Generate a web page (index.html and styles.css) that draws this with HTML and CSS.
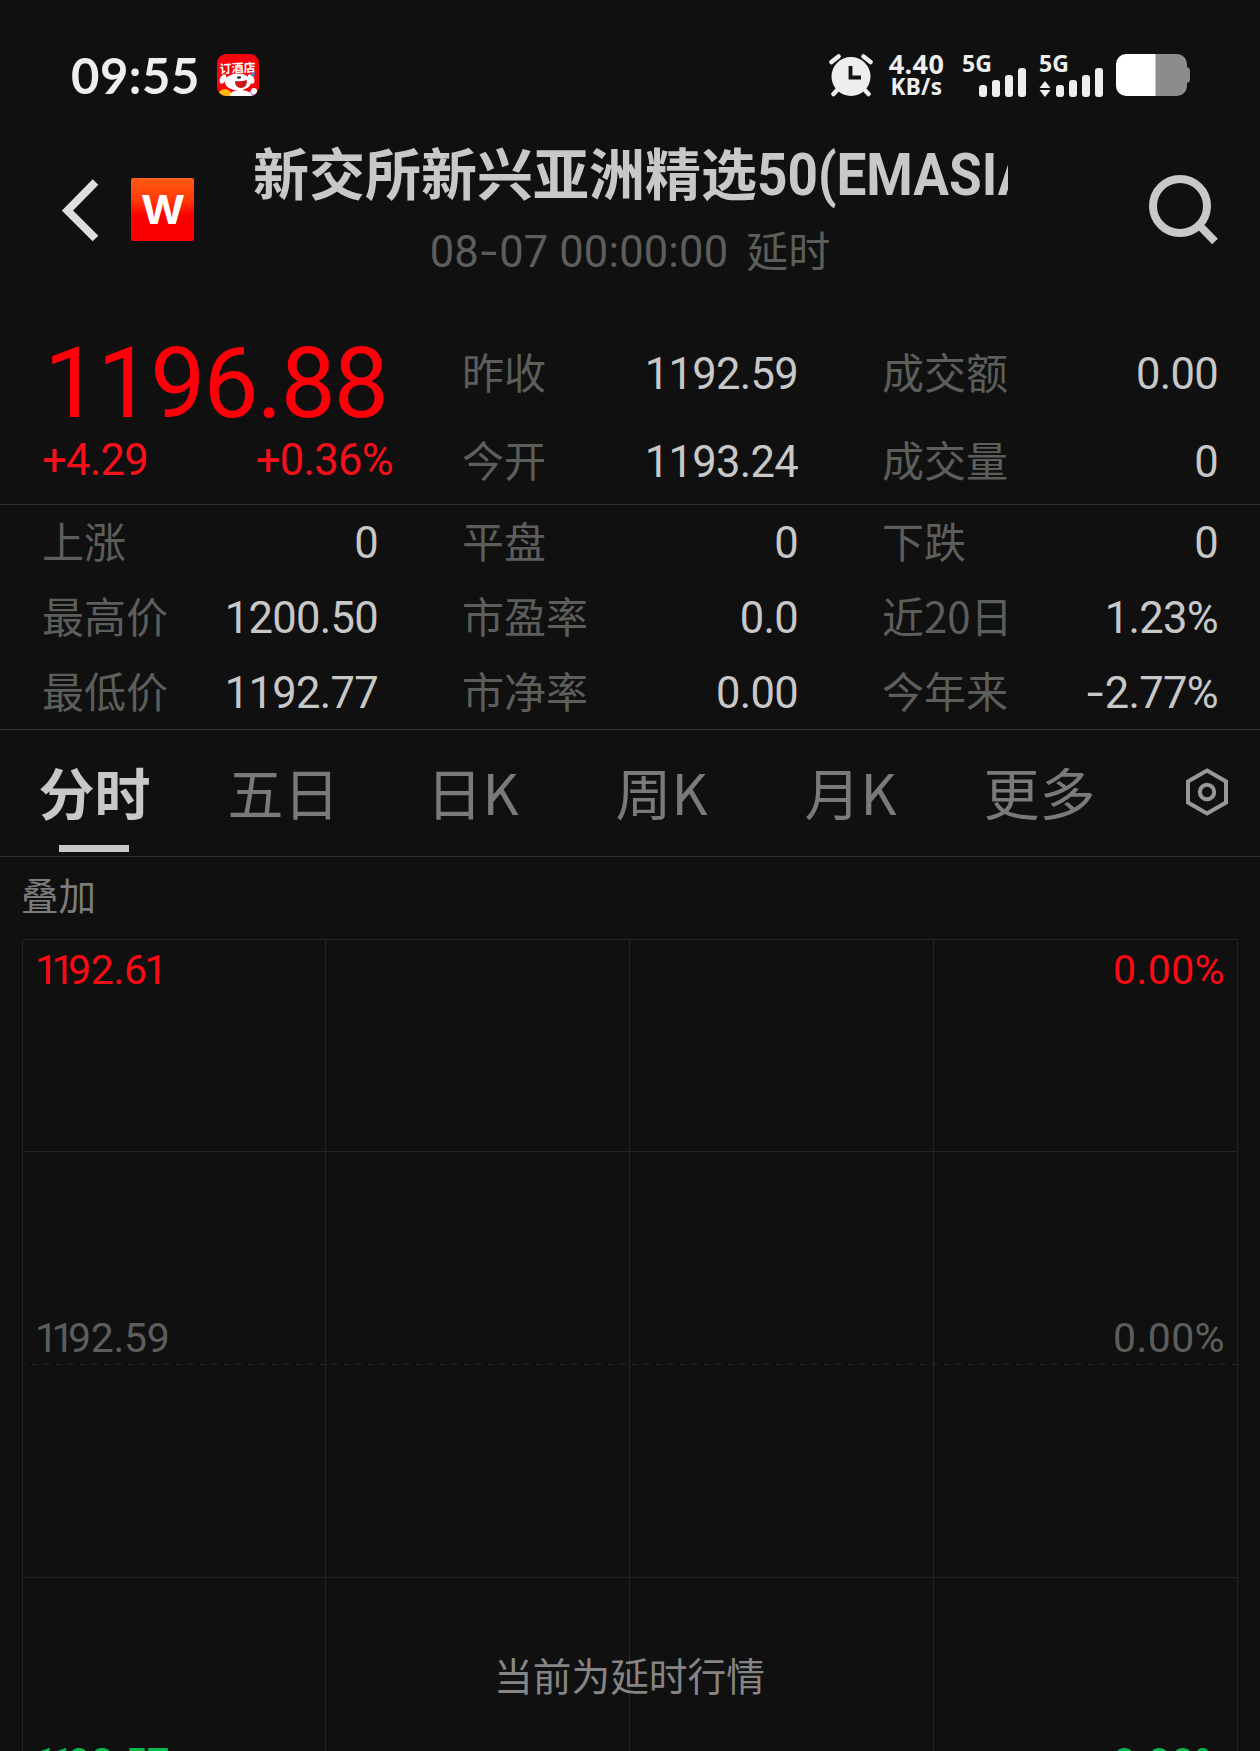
FILE: index.html
```html
<!DOCTYPE html>
<html lang="zh-CN">
<head>
<meta charset="utf-8">
<title>新交所新兴亚洲精选50</title>
<link rel="stylesheet" href="styles.css">
</head>
<body>
<div class="screen">
  <div class="status">
    <span class="clock">09:55</span>
    <svg class="app-icon" width="42" height="42" viewBox="0 0 42 42">
      <defs><clipPath id="app"><rect width="42" height="42" rx="9"/></clipPath></defs>
      <g clip-path="url(#app)">
        <rect width="42" height="42" fill="#f5060e"/>
        <circle cx="8" cy="42" r="7" fill="#ffb70f"/>
        <circle cx="35" cy="42" r="5" fill="#c99af5"/>
        <text x="2.500" y="18.500" class="app-text" transform="rotate(-3 20 15)">订酒店</text>
        <ellipse cx="6" cy="25" rx="3" ry="5" fill="#fff" transform="rotate(25 6 25)"/>
        <ellipse cx="34" cy="25" rx="3" ry="5" fill="#fff" transform="rotate(-25 34 25)"/>
        <ellipse cx="21" cy="28" rx="13" ry="8.500" fill="#fff"/>
        <path d="M13 42c0-8 20-8 22 0z" fill="#fff"/>
        <circle cx="37" cy="37" r="3" fill="#fff"/>
        <path d="M18 27q6 1 12-1q0 8-6 8t-6-7z" fill="#c9151b"/>
        <ellipse cx="22" cy="23.500" rx="2" ry="1.300" fill="#222"/>
        <path d="M33 21l5-4-1 6z" fill="#3d8be8"/>
      </g>
    </svg>
    <div class="status-right">
      <svg class="alarm" width="44" height="43" viewBox="0 0 44 43">
        <g stroke="#eee" stroke-linecap="round" fill="none">
          <path d="M2.500 8l7-5.500M41.500 8l-7-5.500" stroke-width="4.500"/>
          <path d="M10 34l-5.500 6M34 34l5.500 6" stroke-width="4.500"/>
        </g>
        <circle cx="22" cy="22.500" r="19.500" fill="#eee"/>
        <path d="M21.500 12v11.500h10.500" stroke="#101010" stroke-width="3.800" fill="none"/>
      </svg>
      <div class="speed"><span>4.40</span><span class="unit">KB/s</span></div>
      <div class="signal">
        <span class="net">5G</span>
        <svg width="65" height="43" viewBox="0 0 65 43" fill="#eee">
          <rect x="17" y="31" width="8" height="12" rx="3"/><rect x="30" y="26" width="8" height="17" rx="3"/><rect x="43" y="21" width="8" height="22" rx="3"/><rect x="56" y="14" width="8" height="29" rx="3"/>
        </svg>
      </div>
      <div class="signal second">
        <span class="net">5G</span>
        <svg width="65" height="43" viewBox="0 0 65 43" fill="#eee">
          <path d="M6 27l5.500 7h-11zM6 43l5.500-7h-11z"/>
          <rect x="17" y="31" width="8" height="12" rx="3"/><rect x="30" y="26" width="8" height="17" rx="3"/><rect x="43" y="21" width="8" height="22" rx="3"/><rect x="56" y="14" width="8" height="29" rx="3"/>
        </svg>
      </div>
      <svg class="battery" width="75" height="42" viewBox="0 0 75 42">
        <path d="M39 0h22a10 10 0 0 1 10 10v3q3 1 3 4v8q0 3-3 4v3a10 10 0 0 1-10 10h-22z" fill="#8e8b8e"/>
        <path d="M39.500 0h-29.500a10 10 0 0 0-10 10v22a10 10 0 0 0 10 10h29.500z" fill="#fff"/>
      </svg>
    </div>
  </div>

  <header class="header">
    <div class="nav">
      <svg width="38" height="64" viewBox="0 0 38 64"><path d="M33.500 4L5.500 32.500l28 28" fill="none" stroke="#dedede" stroke-width="8"/></svg>
      <svg class="logo" width="63" height="63" viewBox="0 0 63 63">
        <defs><linearGradient id="lg" x2="0" y2="1"><stop offset="0" stop-color="#ff5d12"/><stop offset=".35" stop-color="#ff3a0a"/><stop offset=".6" stop-color="#fb0000"/></linearGradient></defs>
        <rect width="63" height="63" rx="2" fill="url(#lg)"/>
        <text x="32" y="46" class="logo-text" text-anchor="middle" textLength="44" lengthAdjust="spacingAndGlyphs">W</text>
      </svg>
    </div>
    <div class="heading">
      <h1 class="title">新交所新兴亚洲精选<span class="title-latin">50(EMASIA)</span></h1>
      <div class="time"><span class="stamp">08<span class="dash">-</span>07 00:00:00</span><span>延时</span></div>
    </div>
    <svg class="search" width="72" height="72" viewBox="0 0 72 72"><g fill="none" stroke="#c8c8c8"><circle cx="31" cy="33" r="27" stroke-width="8"/><path d="M50 52l16 16.500" stroke-width="8"/></g></svg>
  </header>

  <section class="quote">
    <div class="cell price">1196.88</div>
    <div class="cell"><span class="label">昨收</span><span class="value">1192.59</span></div>
    <div class="cell"><span class="label">成交额</span><span class="value">0.00</span></div>
    <div class="cell change"><span>+4.29</span><span>+0.36%</span></div>
    <div class="cell"><span class="label">今开</span><span class="value">1193.24</span></div>
    <div class="cell"><span class="label">成交量</span><span class="value">0</span></div>
  </section>

  <section class="details">
    <div class="cell"><span class="label">上涨</span><span class="value">0</span></div>
    <div class="cell"><span class="label">平盘</span><span class="value">0</span></div>
    <div class="cell"><span class="label">下跌</span><span class="value">0</span></div>
    <div class="cell"><span class="label">最高价</span><span class="value">1200.50</span></div>
    <div class="cell"><span class="label">市盈率</span><span class="value">0.0</span></div>
    <div class="cell"><span class="label">近20日</span><span class="value">1.23%</span></div>
    <div class="cell"><span class="label">最低价</span><span class="value">1192.77</span></div>
    <div class="cell"><span class="label">市净率</span><span class="value">0.00</span></div>
    <div class="cell"><span class="label">今年来</span><span class="value"><span class="dash">-</span>2.77%</span></div>
  </section>

  <nav class="tabs">
    <span class="tab active">分时</span>
    <span class="tab">五日</span>
    <span class="tab">日K</span>
    <span class="tab">周K</span>
    <span class="tab">月K</span>
    <span class="tab">更多</span>
    <svg class="gear" width="44" height="50" viewBox="0 0 44 50" fill="none" stroke="#98989c" stroke-width="4"><path d="M22 3.500L41 14.500v21L22 46.500L3 35.500v-21z"/><circle cx="22" cy="25" r="7.200"/></svg>
  </nav>

  <div class="overlay">叠加</div>

  <section class="chart">
    <svg class="grid" width="1217" height="812" viewBox="0 0 1217 812" fill="none" stroke="#242424">
      <path d="M.5 812V.5H1215.500V812M303.500 0V812M607.500 0V812M911.500 0V812M0 212.500H1216M0 638.500H1216"/>
      <path d="M-2 425.500H1216" stroke-dasharray="6 6"/>
    </svg>
    <div class="axis up"><span><i>11</i>92.<i class="tight">6</i>1</span><span class="pct">0.00%</span></div>
    <div class="axis mid"><span><i>11</i>92.59</span><span class="pct">0.00%</span></div>
    <div class="notice">当前为延时行情</div>
    <div class="axis down"><span><i>11</i>92.57</span><span class="pct">0.00%</span></div>
  </section>
</div>
</body>
</html>
```
FILE: styles.css
```css
* { box-sizing: border-box; }
html, body { margin: 0; background: #101010; }
svg { display: block; flex: none; }
.screen {
  width: 1260px; height: 1751px; overflow: hidden;
  display: flex; flex-direction: column;
  background: #101010;
  font-family: "Noto Sans CJK SC", sans-serif;
  color: #c8c8c8;
}
.screen > * { flex: none; }

.status { height: 130px; padding: 54px 69px 0 71px; display: flex; align-items: flex-start; color: #eee; }
.clock { width: 146px; font: 700 49px/42px Lato, sans-serif; letter-spacing: .5px; }
.app-text { font: 700 12px "Noto Sans CJK SC", sans-serif; fill: #fff; }
.status-right { margin-left: auto; display: flex; font-family: "Noto Sans", sans-serif; font-weight: 700; }
.speed { width: 57px; margin-left: 15px; display: flex; flex-direction: column; align-items: center; font-size: 27px; line-height: 20px; }
.speed span:first-child { letter-spacing: .4px; }
.speed .unit { font-size: 22.500px; line-height: 26px; letter-spacing: .4px; }
.signal { position: relative; width: 65px; margin-left: 17px; }
.signal.second { margin-left: 12px; }
.net { position: absolute; left: 0; top: -2px; font-size: 23px; line-height: 22px; }
.battery { margin-left: 12px; }

.header { height: 199px; display: grid; grid-template-columns: 252px 756px 252px; align-items: start; }
.nav { display: flex; gap: 31px; padding: 48px 0 0 62px; }
.logo-text { font: 700 40px Inter, sans-serif; fill: #fff; }
.title { margin: 0; padding-left: 1px; font-size: 56px; font-weight: 700; line-height: 81px; height: 86px; overflow: hidden; white-space: nowrap; }
.title-latin { display: inline-block; font-family: Roboto, sans-serif; font-size: 59px; line-height: 60px; transform: scaleX(.9); transform-origin: left; }
.time { display: flex; justify-content: center; gap: 18px; margin-top: 3px; font-size: 42px; line-height: 60px; color: #5c5e5c; }
.stamp { font-family: Roboto, sans-serif; font-size: 43.500px; line-height: 67px; letter-spacing: .15px; }
.dash { display: inline-block; transform: scaleX(1.4); margin: 0 4px; }
.search { justify-self: end; margin: 43px 39px 0 0; }

.quote, .details { display: grid; grid-template-columns: repeat(3, 420px); border-bottom: 1px solid #303030; }
.quote { height: 176px; grid-template-rows: 88px 87px; }
.details { height: 225px; grid-template-rows: repeat(3, 1fr); }
.cell { display: flex; align-items: center; justify-content: space-between; padding: 0 42px; }
.label { font-size: 42px; line-height: 60px; color: #5c5e5c; transform: translateY(-2px); }
.value, .change, .price, .axis { font-family: Roboto, sans-serif; }
.value, .change { font-size: 43.500px; line-height: 50px; letter-spacing: -.7px; }
.value { padding-top: 4px; }
.price { color: #ff000a; font-size: 98px; line-height: 100px; letter-spacing: -1.900px; padding: 21px 0 0 44px; }
.change { color: #f5101a; padding: 0 27px 0 42px; font-size: 43.500px; }

.tabs { height: 127px; display: grid; grid-template-columns: repeat(6, 189px) 126px; border-bottom: 1px solid #303030; font-size: 56px; line-height: 122px; }
.tab { position: relative; text-align: center; color: #7b797b; }
.tab.active { color: #c8c8c8; font-weight: 600; }
.tab.active::after { content: ""; position: absolute; left: 59px; bottom: 4px; width: 70px; height: 7px; background: #c8c8c8; }
.gear { margin: 37px 0 0 51px; }

.overlay { height: 82px; padding-left: 21px; font-size: 37.500px; line-height: 73px; color: #7b7b7b; }
.chart { position: relative; height: 812px; margin-left: 22px; width: 1217px; overflow: hidden; }
.grid { position: absolute; left: 0; top: 0; }
.axis { position: relative; display: flex; justify-content: space-between; padding: 0 14px 0 13px; font-size: 41px; line-height: 50px; letter-spacing: -.3px; }
.axis i { font-style: normal; letter-spacing: -6.500px; }
.axis .tight { letter-spacing: -3px; }
.pct { letter-spacing: .4px; }
.up { margin-top: 6px; color: #fb0a14; }
.mid { margin-top: 318px; color: #5c5e5c; }
.notice { position: relative; margin-top: 284px; padding-right: 2px; text-align: center; font-size: 38.700px; line-height: 54px; color: #858585; }
.down { margin-top: 37px; color: #07b84c; }
```
